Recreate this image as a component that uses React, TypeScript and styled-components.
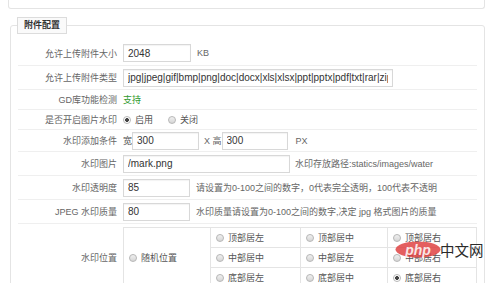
import React from "react";
import styled, { createGlobalStyle } from "styled-components";

const GlobalStyle = createGlobalStyle`
  html, body { margin: 0; padding: 0; background: #fff; }
  body {
    font-family: "Liberation Sans", "Noto Sans CJK SC", sans-serif;
    font-size: 9px;
    color: #666;
  }
  * { box-sizing: border-box; }
`;

const Page = styled.div`
  position: relative;
  width: 491px;
  height: 283px;
  overflow: hidden;
`;

const PrevPanel = styled.div`
  height: 9px;
  margin: 0 6px 0 8px;
  border: 1px solid #e4e4e4;
  border-top: none;
  border-radius: 0 0 3px 3px;
`;

const Fieldset = styled.fieldset`
  margin: 8px 6px 0 10px;
  padding: 7px 7px 0 7px;
  border: 1px solid #e4e4e4;
  border-radius: 3px;
  min-width: 0;
`;

const Legend = styled.legend`
  margin-left: -1px;
  padding: 0 6px;
  height: 17px;
  line-height: 15px;
  border: 1px solid #dcdcdc;
  background: #fafafa;
  font-weight: bold;
  color: #333;
  font-size: 9px;
`;

const Row = styled.div<{ $h?: number }>`
  display: grid;
  grid-template-columns: 105px 1fr;
  align-items: center;
  height: ${(p) => (p.$h ? `${p.$h}px` : "auto")};
  padding: ${(p) => (p.$h ? "0" : "3px 0")};
  border-bottom: 1px solid #efefef;
`;

const Label = styled.div`
  text-align: right;
  padding-right: 6px;
  color: #666;
  white-space: nowrap;
`;

const Value = styled.div`
  display: flex;
  align-items: center;
  white-space: nowrap;
  min-width: 0;
`;

const Input = styled.input<{ $w: number }>`
  width: ${(p) => p.$w}px;
  height: 18px;
  margin: 0;
  border: 1px solid #d8d8d8;
  padding: 0 4px;
  font-family: "Liberation Sans", sans-serif;
  font-size: 10px;
  color: #333;
  background: #fff;
  box-shadow: inset 0 1px 1px rgba(0, 0, 0, 0.05);
  outline: none;
`;

const Note = styled.span<{ $gap: number }>`
  margin-left: ${(p) => p.$gap}px;
  color: #666;
`;

const Supported = styled.span`
  color: #2f9a2f;
`;

const Mark = styled.span`
  color: #555;
`;

const Choice = styled.label<{ $gap?: number }>`
  display: inline-flex;
  align-items: center;
  margin-right: ${(p) => p.$gap ?? 0}px;
  color: #555;
`;

const Radio = styled.span<{ $checked?: boolean }>`
  display: inline-block;
  width: 8px;
  height: 8px;
  border-radius: 50%;
  border: 1px solid #b8b8b8;
  margin-right: 4px;
  background: ${(p) =>
    p.$checked
      ? "radial-gradient(circle, #444 0 1.6px, #fff 2.2px)"
      : "linear-gradient(#f0f0f0, #d6d6d6)"};
`;

const PosTable = styled.table`
  border-collapse: collapse;
  margin-left: 0;
  td {
    border: 1px solid #e4e4e4;
    height: 20px;
    padding: 0 5px;
    white-space: nowrap;
    color: #555;
  }
`;

const Cell = styled.td<{ $w: number }>`
  width: ${(p) => p.$w}px;
`;

const Logo = styled.div`
  position: absolute;
  left: 395px;
  top: 241px;
  display: flex;
  align-items: center;
  pointer-events: none;
`;

const LogoText = styled.span`
  font-family: "Noto Sans CJK SC", sans-serif;
  font-size: 14.5px;
  line-height: 16px;
  color: #2a2a2a;
  margin-left: -1px;
`;

type Pos = { text: string; checked?: boolean };

const grid: Pos[][] = [
  [{ text: "顶部居左" }, { text: "顶部居中" }, { text: "顶部居右" }],
  [{ text: "中部居中" }, { text: "中部居左" }, { text: "中部居右" }],
  [{ text: "底部居左" }, { text: "底部居中" }, { text: "底部居右", checked: true }],
];

const widths = [90, 87, 89];

export default function App() {
  return (
    <Page>
      <GlobalStyle />
      <PrevPanel />
      <Fieldset>
        <Legend>附件配置</Legend>

        <Row $h={25}>
          <Label>允许上传附件大小</Label>
          <Value>
            <Input $w={68} defaultValue="2048" />
            <Note $gap={6}>KB</Note>
          </Value>
        </Row>

        <Row $h={24}>
          <Label>允许上传附件类型</Label>
          <Value>
            <Input
              $w={270}
              defaultValue="jpg|jpeg|gif|bmp|png|doc|docx|xls|xlsx|ppt|pptx|pdf|txt|rar|zip|swf"
            />
          </Value>
        </Row>

        <Row $h={20}>
          <Label>GD库功能检测</Label>
          <Value>
            <Supported>支持</Supported>
          </Value>
        </Row>

        <Row $h={20}>
          <Label>是否开启图片水印</Label>
          <Value>
            <Choice $gap={15}>
              <Radio $checked />
              启用
            </Choice>
            <Choice>
              <Radio />
              关闭
            </Choice>
          </Value>
        </Row>

        <Row $h={22}>
          <Label>水印添加条件</Label>
          <Value>
            <Mark>宽</Mark>
            <Input $w={67} defaultValue="300" />
            <Note $gap={5}>X 高</Note>
            <Input $w={66} defaultValue="300" />
            <Note $gap={8}>PX</Note>
          </Value>
        </Row>

        <Row $h={24}>
          <Label>水印图片</Label>
          <Value>
            <Input $w={167} defaultValue="/mark.png" />
            <Note $gap={5}>水印存放路径:statics/images/water</Note>
          </Value>
        </Row>

        <Row $h={24}>
          <Label>水印透明度</Label>
          <Value>
            <Input $w={67} defaultValue="85" />
            <Note $gap={6}>请设置为0-100之间的数字，0代表完全透明，100代表不透明</Note>
          </Value>
        </Row>

        <Row $h={24}>
          <Label>JPEG 水印质量</Label>
          <Value>
            <Input $w={67} defaultValue="80" />
            <Note $gap={6}>水印质量请设置为0-100之间的数字,决定 jpg 格式图片的质量</Note>
          </Value>
        </Row>

        <Row>
          <Label>水印位置</Label>
          <Value>
            <PosTable>
              <tbody>
                {grid.map((row, i) => (
                  <tr key={i}>
                    {i === 0 && (
                      <Cell $w={87} rowSpan={3}>
                        <Choice>
                          <Radio />
                          随机位置
                        </Choice>
                      </Cell>
                    )}
                    {row.map((c, j) => (
                      <Cell key={j} $w={widths[j]}>
                        <Choice>
                          <Radio $checked={c.checked} />
                          {c.text}
                        </Choice>
                      </Cell>
                    ))}
                  </tr>
                ))}
              </tbody>
            </PosTable>
          </Value>
        </Row>
      </Fieldset>

      <Logo>
        <svg width="46" height="17" viewBox="0 0 46 17">
          <ellipse cx="23" cy="8.5" rx="22.5" ry="8" fill="rgba(222, 60, 60, 0.82)" />
          <text
            x="23"
            y="13.5"
            textAnchor="middle"
            fontFamily="Liberation Sans, sans-serif"
            fontStyle="italic"
            fontWeight="bold"
            fontSize="14"
            fill="rgba(255,255,255,0.85)"
          >
            php
          </text>
        </svg>
        <LogoText>中文网</LogoText>
      </Logo>
    </Page>
  );
}
